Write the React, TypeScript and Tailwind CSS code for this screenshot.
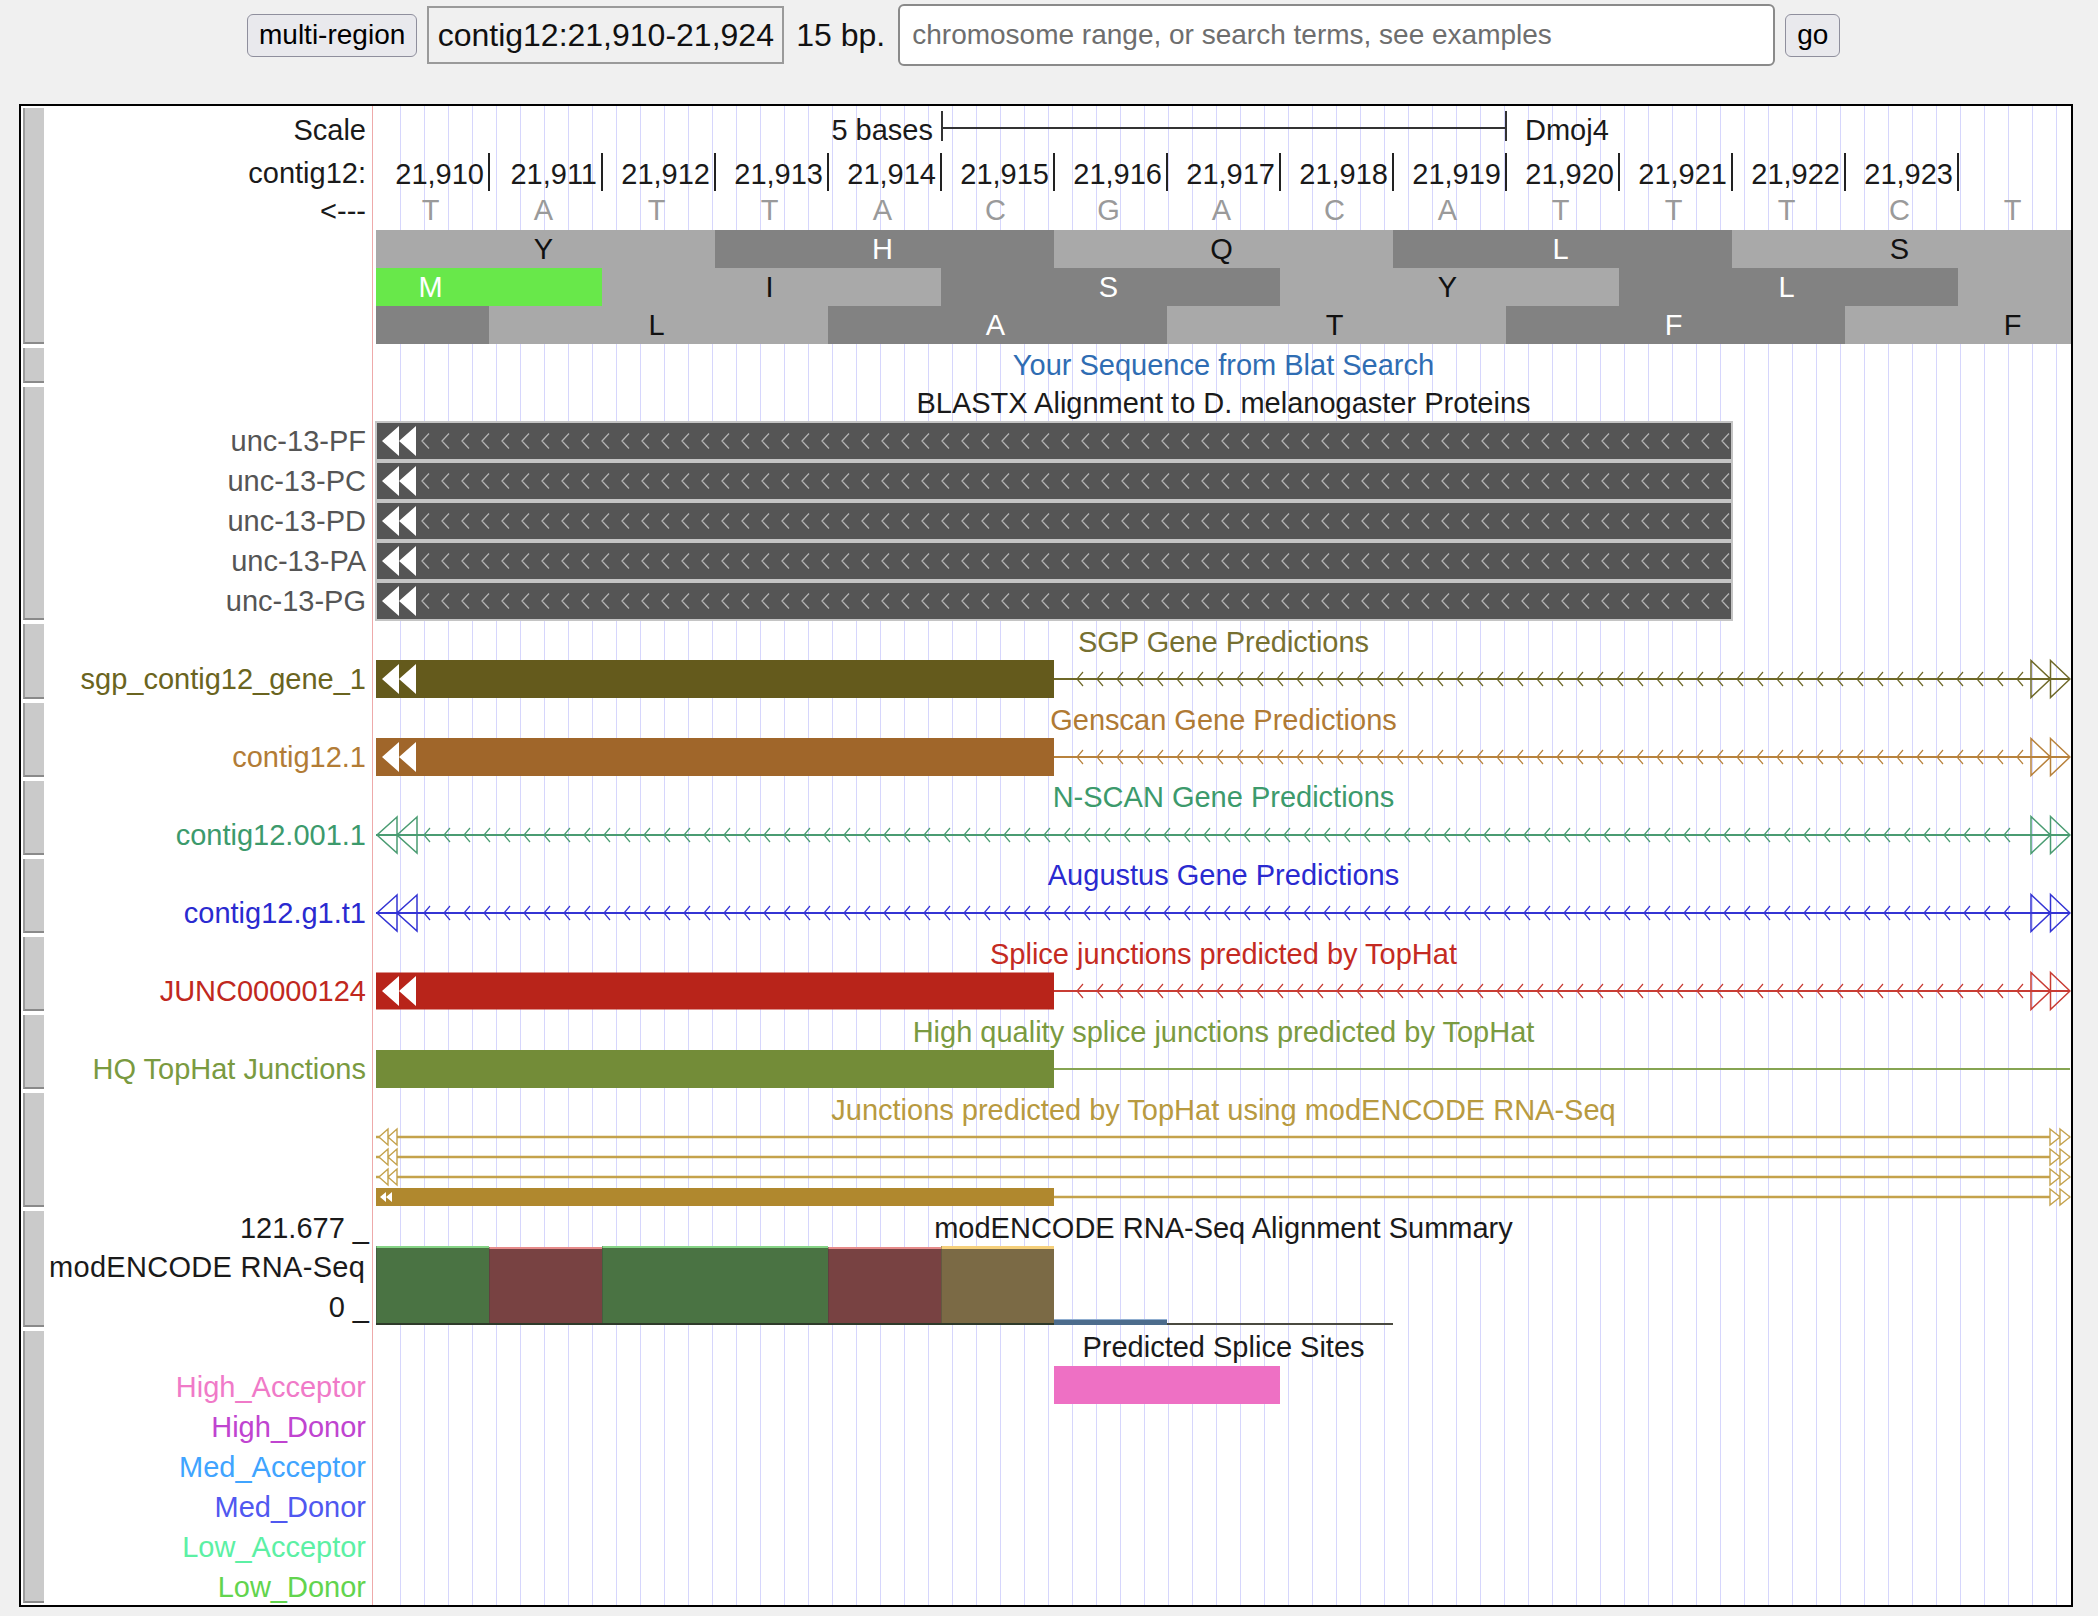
import React from "react";

// data image geometry (svg coordinates, x=0 is the red boundary line)
const X0 = 4;
const BW = 113;
const W = 1699;
const MID = 851.5;
const bx = (b: number) => X0 + b * BW;

const chev = (x1: number, x2: number, cy: number, len = 6, half = 7) => {
  let d = "";
  for (let x = x1; x <= x2; x += 20) d += `M${x + len} ${cy - half}L${x} ${cy}L${x + len} ${cy + half}`;
  return d;
};

const fillArrows = (x: number, cy: number, half = 15, w = 17) =>
  `M${x} ${cy}L${x + w} ${cy - half}L${x + w} ${cy + half}ZM${x + w} ${cy}L${x + 2 * w} ${cy - half}L${x + 2 * w} ${cy + half}Z`;

const openLeft = (x: number, cy: number, half: number, w = 20) =>
  `M${x + w} ${cy - half}L${x} ${cy}L${x + w} ${cy + half}ZM${x + 2 * w} ${cy - half}L${x + w} ${cy}L${x + 2 * w} ${cy + half}Z`;

const openRight = (x: number, cy: number, half: number, w = 19.5) =>
  `M${x} ${cy - half}L${x + w} ${cy}L${x} ${cy + half}ZM${x + w} ${cy - half}L${x + 2 * w} ${cy}L${x + w} ${cy + half}Z`;

function Track({ h, children }: { h: number; children?: React.ReactNode }) {
  const guides = [];
  for (let x = X0 + 24; x < W; x += 24)
    guides.push(<line key={x} x1={x + 0.5} x2={x + 0.5} y1={0} y2={h} stroke="#d6d6fc" />);
  return (
    <svg width={W} height={h} className="block shrink-0" fontFamily="Liberation Sans, Arial, sans-serif" fontSize={29}>
      {guides}
      <line x1={0.5} x2={0.5} y1={0} y2={h} stroke="#eeaaaa" />
      {children}
    </svg>
  );
}

function Title({ y, color = "#1a1a1a", children }: { y: number; color?: string; children: React.ReactNode }) {
  return (
    <text x={MID} y={y} textAnchor="middle" dominantBaseline="central" fill={color}>
      {children}
    </text>
  );
}

function Group({ h, hc, labels, children }: { h: number; hc: string; labels?: React.ReactNode; children?: React.ReactNode }) {
  return (
    <div className={`flex ${hc}`}>
      <div className="flex w-[25px] shrink-0 py-[2px] pl-[2px]">
        <div className="w-[21px] border-b-2 border-l-2 border-b-[#8a8a8a] border-l-[#9c9c9c] bg-[#cacaca]" />
      </div>
      <div className="w-[326px] shrink-0 overflow-hidden text-[29px] leading-none">{labels}</div>
      <Track h={h}>{children}</Track>
    </div>
  );
}

function Lab({ c, children }: { c: string; children: React.ReactNode }) {
  return <div className={`flex items-center justify-end whitespace-nowrap pr-[6px] ${c}`}>{children}</div>;
}

function Gene({
  cy,
  color,
  barFill,
  barEnd,
  half = 19,
  left,
  right = true,
  chevrons = true,
}: {
  cy: number;
  color: string;
  barFill?: string;
  barEnd?: number;
  half?: number;
  left?: "fill" | "open";
  right?: boolean;
  chevrons?: boolean;
}) {
  return (
    <g>
      <line x1={barEnd ?? X0} x2={W - 1} y1={cy} y2={cy} stroke={color} strokeWidth={2} />
      {chevrons && (
        <path d={chev(barEnd ? barEnd + 23 : X0 + 48, W - 50, cy)} stroke={color} strokeWidth={1.2} fill="none" />
      )}
      {barEnd && <rect x={X0} y={cy - half} width={barEnd - X0} height={half * 2} fill={barFill} />}
      {left === "fill" && <path d={fillArrows(X0 + 6, cy)} fill="white" />}
      {left === "open" && <path d={openLeft(X0 + 1, cy, 18)} fill="none" stroke={color} strokeWidth={1.5} />}
      {right && <path d={openRight(W - 40, cy, 18.5)} fill="none" stroke={color} strokeWidth={1.5} />}
    </g>
  );
}

const BASES = "TATTACGACATTTCT";
const LIGHT = "#a9a9a9";
const DARK = "#828282";

type Codon = [number, number, string, string, number];
const codonRows: Codon[][] = [
  [
    [0, 3, LIGHT, "Y", 1.5],
    [3, 6, DARK, "H", 4.5],
    [6, 9, LIGHT, "Q", 7.5],
    [9, 12, DARK, "L", 10.5],
    [12, 15, LIGHT, "S", 13.5],
  ],
  [
    [0, 2, "#68e84a", "M", 0.5],
    [2, 5, LIGHT, "I", 3.5],
    [5, 8, DARK, "S", 6.5],
    [8, 11, LIGHT, "Y", 9.5],
    [11, 14, DARK, "L", 12.5],
    [14, 15, LIGHT, "", 14.5],
  ],
  [
    [0, 1, DARK, "", 0.5],
    [1, 4, LIGHT, "L", 2.5],
    [4, 7, DARK, "A", 5.5],
    [7, 10, LIGHT, "T", 8.5],
    [10, 13, DARK, "F", 11.5],
    [13, 15, LIGHT, "F", 14.5],
  ],
];

function Ruler() {
  return (
    <>
      <text x={561} y={24} textAnchor="end" dominantBaseline="central" fill="#1a1a1a">
        5 bases
      </text>
      <line x1={569} x2={1134} y1={22} y2={22} stroke="#333" strokeWidth={2} />
      <line x1={570} x2={570} y1={5} y2={35} stroke="#333" strokeWidth={2} />
      <line x1={1134} x2={1134} y1={5} y2={35} stroke="#333" strokeWidth={2} />
      <text x={1153} y={24} dominantBaseline="central" fill="#1a1a1a">
        Dmoj4
      </text>
      {Array.from({ length: 14 }, (_, i) => (
        <g key={i}>
          <text x={bx(i + 1) - 5} y={68} textAnchor="end" dominantBaseline="central" fill="#1a1a1a">
            {`21,${910 + i}`}
          </text>
          <line x1={bx(i + 1)} x2={bx(i + 1)} y1={47} y2={85} stroke="#222" strokeWidth={2} />
        </g>
      ))}
      {BASES.split("").map((b, i) => (
        <text key={i} x={bx(i + 0.5) - 2} y={104} textAnchor="middle" dominantBaseline="central" fill="#9a9a9a">
          {b}
        </text>
      ))}
      {codonRows.map((row, r) =>
        row.map(([a, b, fill, letter, pos]) => (
          <g key={`${r}-${a}`}>
            <rect x={bx(a)} y={124 + r * 38} width={(b - a) * BW} height={38} fill={fill} />
            {letter && (
              <text
                x={bx(pos) - 2}
                y={124 + r * 38 + 19}
                textAnchor="middle"
                dominantBaseline="central"
                fill={fill === LIGHT ? "#111" : "#fff"}
              >
                {letter}
              </text>
            )}
          </g>
        ))
      )}
    </>
  );
}

const blastx = ["unc-13-PF", "unc-13-PC", "unc-13-PD", "unc-13-PA", "unc-13-PG"];

export default function App() {
  return (
    <div className="min-h-screen w-full bg-[#f0f0f0] font-['Liberation_Sans',Arial,sans-serif] text-[#111]">
      <div className="flex h-[70px] items-center pl-[247px]">
        <button className="h-[43px] rounded-[6px] border border-[#8f8f9d] bg-[#e9e9ed] px-[11px] text-[28px] leading-none text-black">
          multi-region
        </button>
        <div className="ml-[10px] flex h-[58px] w-[357px] items-center justify-center border-2 border-[#9a9a9a] text-[32px] leading-none">
          contig12:21,910-21,924
        </div>
        <span className="ml-[12px] text-[32px] leading-none">15 bp.</span>
        <input
          readOnly
          placeholder="chromosome range, or search terms, see examples"
          className="ml-[13px] h-[62px] w-[877px] rounded-[6px] border-2 border-[#8a8a8a] bg-white pl-[12px] text-[28px] outline-none placeholder:text-[#6e6e6e]"
        />
        <button className="ml-[10px] h-[43px] rounded-[6px] border border-[#8f8f9d] bg-[#e9e9ed] px-[11px] text-[28px] leading-none text-black">
          go
        </button>
      </div>

      <div className="ml-[19px] mt-[34px] w-[2054px] border-2 border-black bg-white">
        <Group
          h={240}
          hc="h-[240px]"
          labels={
            <div className="pt-[4px] text-[#1a1a1a]">
              <Lab c="h-[40px]">Scale</Lab>
              <Lab c="h-[46px]">contig12:</Lab>
              <Lab c="h-[30px]">&lt;---</Lab>
            </div>
          }
        >
          <Ruler />
        </Group>

        <Group h={39} hc="h-[39px]">
          <Title y={19} color="#2f6db3">
            Your Sequence from Blat Search
          </Title>
        </Group>

        <Group
          h={237}
          hc="h-[237px]"
          labels={
            <div className="pt-[36px] text-[#555]">
              {blastx.map((n) => (
                <Lab key={n} c="h-[40px]">
                  {n}
                </Lab>
              ))}
            </div>
          }
        >
          <Title y={18}>BLASTX Alignment to D. melanogaster Proteins</Title>
          {blastx.map((n, k) => {
            const top = 37 + k * 40;
            return (
              <g key={n}>
                <rect x={X0} y={top} width={bx(12) - X0} height={38} fill="#555" stroke="#c4c4c4" strokeWidth={2} />
                <path d={fillArrows(X0 + 6, top + 19)} fill="white" />
                <path d={chev(X0 + 46, bx(12) - 10, top + 19, 7, 7.5)} stroke="#b4b4b4" strokeWidth={1.3} fill="none" />
              </g>
            );
          })}
        </Group>

        <Group
          h={79}
          hc="h-[79px]"
          labels={
            <div className="pt-[38px] text-[#6a6420]">
              <Lab c="h-[38px]">sgp_contig12_gene_1</Lab>
            </div>
          }
        >
          <Title y={20} color="#767030">
            SGP Gene Predictions
          </Title>
          <Gene cy={57} color="#6e6828" barFill="#645a1c" barEnd={bx(6)} left="fill" />
        </Group>

        <Group
          h={78}
          hc="h-[78px]"
          labels={
            <div className="pt-[37px] text-[#b27c36]">
              <Lab c="h-[38px]">contig12.1</Lab>
            </div>
          }
        >
          <Title y={19} color="#b07a34">
            Genscan Gene Predictions
          </Title>
          <Gene cy={56} color="#b8823c" barFill="#a0662a" barEnd={bx(6)} left="fill" />
        </Group>

        <Group
          h={78}
          hc="h-[78px]"
          labels={
            <div className="pt-[37px] text-[#3c9a6c]">
              <Lab c="h-[38px]">contig12.001.1</Lab>
            </div>
          }
        >
          <Title y={18} color="#3c9a6c">
            N-SCAN Gene Predictions
          </Title>
          <Gene cy={56} color="#4a9c72" left="open" />
        </Group>

        <Group
          h={78}
          hc="h-[78px]"
          labels={
            <div className="pt-[37px] text-[#2a2ad0]">
              <Lab c="h-[38px]">contig12.g1.t1</Lab>
            </div>
          }
        >
          <Title y={18} color="#2a2ad0">
            Augustus Gene Predictions
          </Title>
          <Gene cy={56} color="#3434d4" left="open" />
        </Group>

        <Group
          h={78}
          hc="h-[78px]"
          labels={
            <div className="pt-[37px] text-[#c0281e]">
              <Lab c="h-[38px]">JUNC00000124</Lab>
            </div>
          }
        >
          <Title y={19} color="#c42a22">
            Splice junctions predicted by TopHat
          </Title>
          <Gene cy={56} color="#c83c34" barFill="#b8241a" barEnd={bx(6)} left="fill" half={18.5} />
        </Group>

        <Group
          h={78}
          hc="h-[78px]"
          labels={
            <div className="pt-[37px] text-[#7a9a40]">
              <Lab c="h-[38px]">HQ TopHat Junctions</Lab>
            </div>
          }
        >
          <Title y={19} color="#7a9a40">
            High quality splice junctions predicted by TopHat
          </Title>
          <Gene cy={56} color="#86a452" barFill="#738c38" barEnd={bx(6)} right={false} chevrons={false} />
        </Group>

        <Group h={118} hc="h-[118px]">
          <Title y={19} color="#b89a40">
            Junctions predicted by TopHat using modENCODE RNA-Seq
          </Title>
          {[46, 66, 86, 106].map((y, k) => (
            <g key={y}>
              <line x1={X0} x2={W - 1} y1={y} y2={y} stroke="#c4a24c" strokeWidth={2.5} />
              <path d={openRight(W - 21, y, 8, 10)} fill="white" stroke="#c4a24c" strokeWidth={1.4} />
              {k < 3 && <path d={openLeft(X0 + 3, y, 8, 9)} fill="white" stroke="#c4a24c" strokeWidth={1.4} />}
            </g>
          ))}
          <rect x={X0} y={97} width={bx(6) - X0} height={18} fill="#b0882e" />
          <path d={fillArrows(X0 + 4, 106, 5, 6)} fill="white" />
        </Group>

        <Group
          h={120}
          hc="h-[120px]"
          labels={
            <div className="text-[#1a1a1a]">
              <Lab c="h-[38px] !pr-[3px]">121.677 _</Lab>
              <div className="flex h-[40px] items-center whitespace-nowrap pl-[3px] tracking-[0.3px]">modENCODE RNA-Seq</div>
              <Lab c="h-[40px] !pr-[3px]">0 _</Lab>
            </div>
          }
        >
          <Title y={19}>modENCODE RNA-Seq Alignment Summary</Title>
          {(
            [
              [0, 1, "#4a7343", "#86d486", 37, 2],
              [1, 2, "#784242", "#e68a8a", 38, 2],
              [2, 4, "#4a7343", "#86d486", 37, 2],
              [4, 5, "#784242", "#e68a8a", 38, 2],
              [5, 6, "#7b6a45", "#f5cf7a", 37, 3],
            ] as [number, number, string, string, number, number][]
          ).map(([a, b, fill, top, y, sh]) => (
            <g key={a}>
              <rect x={bx(a)} y={y} width={(b - a) * BW} height={116 - y} fill={fill} />
              <rect x={bx(a)} y={y} width={(b - a) * BW} height={sh} fill={top} />
              <rect x={bx(a)} y={y} width={1} height={116 - y} fill="#3a3a3a" opacity={0.35} />
            </g>
          ))}
          <rect x={X0} y={114} width={bx(6) - X0} height={2} fill="#2e3a2a" />
          <rect x={bx(6)} y={110} width={BW} height={6} fill="#4c6c8c" />
          <rect x={bx(6)} y={110} width={BW} height={1} fill="#90aed0" />
          <rect x={bx(7)} y={114} width={2 * BW} height={2} fill="#4a4a40" />
        </Group>

        <Group
          h={276}
          hc="h-[276px]"
          labels={
            <div className="pt-[38px]">
              <Lab c="h-[40px] text-[#f07ac8]">High_Acceptor</Lab>
              <Lab c="h-[40px] text-[#c044d0]">High_Donor</Lab>
              <Lab c="h-[40px] text-[#40a4ff]">Med_Acceptor</Lab>
              <Lab c="h-[40px] text-[#5058f0]">Med_Donor</Lab>
              <Lab c="h-[40px] text-[#5cf0a4]">Low_Acceptor</Lab>
              <Lab c="h-[40px] text-[#62d44e]">Low_Donor</Lab>
            </div>
          }
        >
          <Title y={18}>Predicted Splice Sites</Title>
          <rect x={bx(6)} y={37} width={2 * BW} height={38} fill="#ee70c4" />
        </Group>
      </div>
    </div>
  );
}
